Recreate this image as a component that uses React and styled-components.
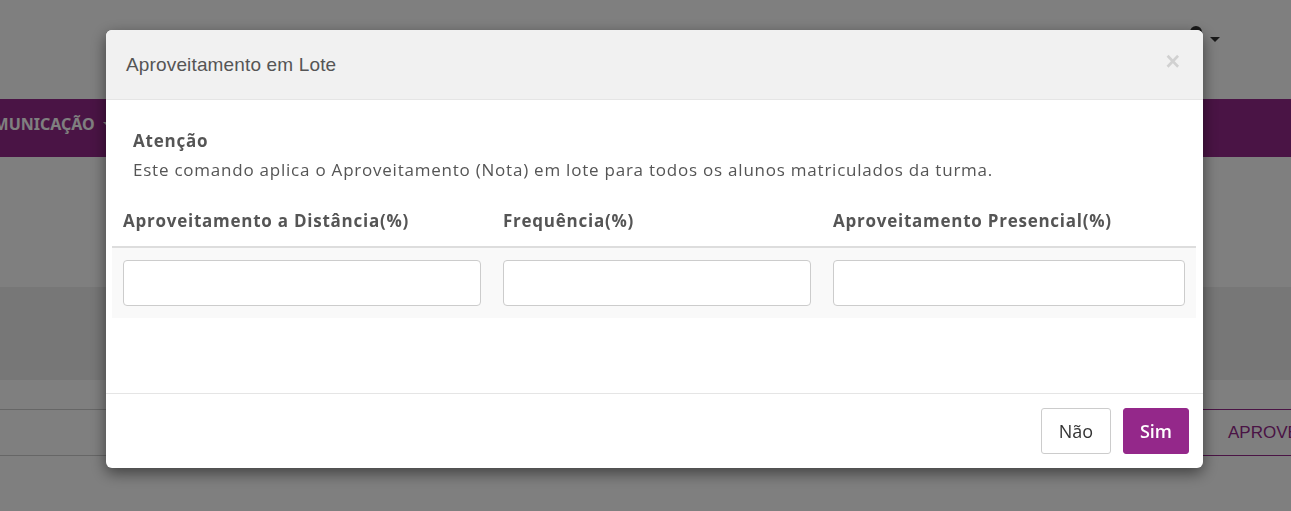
import React from 'react';
import styled, { createGlobalStyle } from 'styled-components';

// Shared values
const purple = '#94288a';
const uiFont = `'Open Sans', 'Noto Sans', sans-serif`;
const titleFont = `'Liberation Sans', Arial, sans-serif`;

const GlobalStyle = createGlobalStyle`
  html, body {
    margin: 0;
    padding: 0;
    height: 100%;
  }
  body {
    background: #fff;
    font-family: ${uiFont};
    overflow: hidden;
  }
  * {
    box-sizing: border-box;
  }
`;

// Page behind the dialog
const Page = styled.div`
  display: flex;
  flex-direction: column;
  height: 511px;
`;

const TopBar = styled.header`
  height: 99px;
  display: flex;
  justify-content: flex-end;
  align-items: flex-start;
  gap: 8px;
  padding: 26px 71px 0 0;
`;

const UserIcon = styled.span`
  width: 12px;
  height: 12px;
  border-radius: 50%;
  background: #333;
`;

const Caret = styled.span`
  margin-top: 11px;
  width: 0;
  height: 0;
  border-left: 5px solid transparent;
  border-right: 5px solid transparent;
  border-top: 5px solid #333;
`;

const Nav = styled.nav`
  height: 58px;
  background: ${purple};
  display: flex;
  align-items: center;
  padding-bottom: 8px;
  margin-left: -29px;
`;

const NavItem = styled.span`
  font-family: 'Noto Sans', sans-serif;
  font-weight: 700;
  font-size: 16px;
  color: #fff;
  display: flex;
  align-items: center;
  gap: 8px;

  &::after {
    content: '';
    border-left: 4px solid transparent;
    border-right: 4px solid transparent;
    border-top: 4px solid #fff;
  }
`;

const Blank = styled.div`
  height: ${(p) => p.$h}px;
`;

const Panel = styled.div`
  height: 93px;
  background: #eee;
`;

const ListRow = styled.div`
  height: 47px;
  border-top: 1px solid #ccc;
  border-bottom: 1px solid #ccc;
  display: flex;
  justify-content: flex-end;
`;

const OutlineButton = styled.div`
  width: 91px;
  margin: -1px 0;
  border: 1px solid ${purple};
  border-right: none;
  display: flex;
  align-items: center;
  padding-left: 27px;
  font-family: ${titleFont};
  font-size: 17px;
  color: ${purple};
  white-space: nowrap;
  overflow: hidden;
`;

// Dialog
const Backdrop = styled.div`
  position: fixed;
  inset: 0;
  background: rgba(0, 0, 0, 0.5);
  padding: 30px 0 0 106px;
`;

const Dialog = styled.div`
  width: 1097px;
  height: 438px;
  background: #fff;
  border-radius: 6px;
  box-shadow: 0 5px 15px rgba(0, 0, 0, 0.5);
  display: flex;
  flex-direction: column;
  overflow: hidden;
`;

const DialogHeader = styled.div`
  height: 70px;
  background: #f1f1f1;
  border-bottom: 1px solid #e5e5e5;
  display: flex;
  align-items: center;
  justify-content: space-between;
  padding: 0 23px 0 20px;
`;

const DialogTitle = styled.h4`
  margin: 0;
  font-family: ${titleFont};
  font-weight: 400;
  font-size: 19px;
  letter-spacing: 0.15px;
  color: #555;
`;

const Close = styled.button`
  border: none;
  background: none;
  padding: 0;
  margin-top: -7px;
  font-family: ${titleFont};
  font-size: 25px;
  font-weight: 700;
  line-height: 1;
  color: #000;
  opacity: 0.13;
  cursor: pointer;
`;

const DialogBody = styled.div`
  flex: 1;
  padding: 29px 7px 0 6px;
`;

const Notice = styled.div`
  padding-left: 21px;
  color: #555;
  font-size: 17px;
  letter-spacing: 0.77px;
  line-height: 24px;
`;

const NoticeTitle = styled.div`
  font-weight: 700;
  margin-bottom: 5px;
`;

const Table = styled.table`
  width: 100%;
  margin-top: 15px;
  border-collapse: collapse;
  table-layout: fixed;
`;

const Th = styled.th`
  text-align: left;
  padding: 12px 11px 13px;
  border-bottom: 2px solid #ddd;
  font-size: 17px;
  letter-spacing: 0.75px;
  line-height: 24px;
  font-weight: 700;
  color: #555;
  white-space: nowrap;
`;

const Tr = styled.tr`
  background: #f9f9f9;
`;

const Td = styled.td`
  padding: 12px 11px;
`;

const Input = styled.input`
  display: block;
  width: 100%;
  height: 46px;
  border: 1px solid #ccc;
  border-radius: 4px;
  background: #fff;
  font-family: ${uiFont};
  font-size: 16px;
  padding: 6px 12px;
`;

const DialogFooter = styled.div`
  height: 75px;
  border-top: 1px solid #e5e5e5;
  display: flex;
  justify-content: flex-end;
  align-items: center;
  gap: 12px;
  padding: 0 14px;
`;

const Button = styled.button`
  height: 46px;
  width: ${(p) => (p.$primary ? 66 : 70)}px;
  padding: 0;
  border-radius: 3px;
  border: 1px solid ${(p) => (p.$primary ? purple : '#ccc')};
  background: ${(p) => (p.$primary ? purple : '#fff')};
  color: ${(p) => (p.$primary ? '#fff' : '#333')};
  font-family: ${uiFont};
  font-weight: ${(p) => (p.$primary ? 600 : 400)};
  font-size: 18px;
  cursor: pointer;
`;

const columns = [
  { label: 'Aproveitamento a Distância(%)', width: 380 },
  { label: 'Frequência(%)', width: 330 },
  { label: 'Aproveitamento Presencial(%)', width: 374 },
];

export default function App() {
  return (
    <>
      <GlobalStyle />
      <Page>
        <TopBar>
          <UserIcon />
          <Caret />
        </TopBar>
        <Nav>
          <NavItem>COMUNICAÇÃO</NavItem>
        </Nav>
        <Blank $h={130} />
        <Panel />
        <Blank $h={29} />
        <ListRow>
          <OutlineButton>APROVEITAMENTO</OutlineButton>
        </ListRow>
      </Page>

      <Backdrop>
        <Dialog>
          <DialogHeader>
            <DialogTitle>Aproveitamento em Lote</DialogTitle>
            <Close aria-label="Fechar">×</Close>
          </DialogHeader>
          <DialogBody>
            <Notice>
              <NoticeTitle>Atenção</NoticeTitle>
              Este comando aplica o Aproveitamento (Nota) em lote para todos os alunos matriculados da turma.
            </Notice>
            <Table>
              <colgroup>
                {columns.map((c) => (
                  <col key={c.label} style={{ width: c.width }} />
                ))}
              </colgroup>
              <thead>
                <tr>
                  {columns.map((c) => (
                    <Th key={c.label}>{c.label}</Th>
                  ))}
                </tr>
              </thead>
              <tbody>
                <Tr>
                  {columns.map((c) => (
                    <Td key={c.label}>
                      <Input type="text" />
                    </Td>
                  ))}
                </Tr>
              </tbody>
            </Table>
          </DialogBody>
          <DialogFooter>
            <Button>Não</Button>
            <Button $primary>Sim</Button>
          </DialogFooter>
        </Dialog>
      </Backdrop>
    </>
  );
}
